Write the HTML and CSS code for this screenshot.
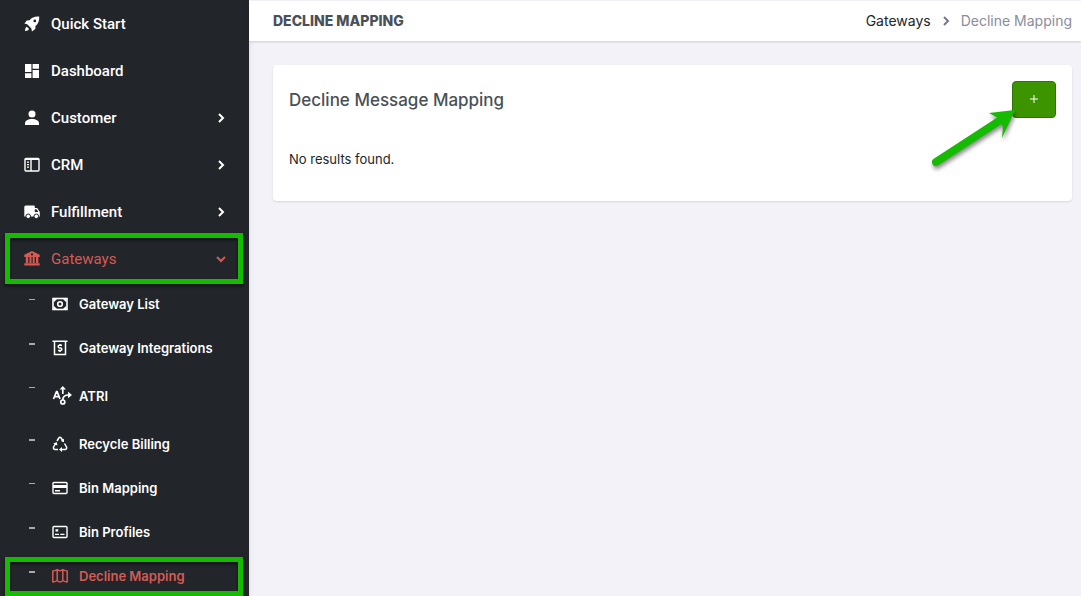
FILE: index.html
```html
<!DOCTYPE html>
<html lang="en">
<head>
<meta charset="utf-8">
<title>Decline Mapping</title>
<link rel="stylesheet" href="styles.css">
</head>
<body>
<div class="app">
  <nav class="sidebar" aria-label="Main">
    <ul class="menu">
      <li><a class="menu-link" href="#">
        <svg class="icon" viewBox="0 0 16 16"><path fill="currentColor" fill-rule="evenodd" d="M15.200.6C11 .2 7.800 1.500 5.600 4.200L2.800 4.400.4 7.600l2.800.6 4.200 4.200.5 3 3.400-2.400.2-2.900C14.200 7.800 15.500 5 15.200.6zM10.800 3.500a1.400 1.400 0 1 1 0 2.800 1.400 1.400 0 0 1 0-2.800zM2.800 10.800l2.300 2.300L3.800 14.400.9 15l.6-2.900z"/></svg>
        <span>Quick Start</span></a></li>
      <li><a class="menu-link" href="#">
        <svg class="icon" viewBox="0 0 16 16"><path fill="currentColor" d="M1 1h6.400v8H1zM8.600 1H15v4.800H8.600zM1 10.200h6.400V15H1zM8.600 7H15v8H8.600z"/></svg>
        <span>Dashboard</span></a></li>
      <li><a class="menu-link" href="#">
        <svg class="icon" viewBox="0 0 16 16"><circle cx="8" cy="4" r="3.500" fill="currentColor"/><path fill="currentColor" d="M1 15v-1.500C1 10.500 4 9 8 9s7 1.500 7 4.500V15z"/></svg>
        <span>Customer</span>
        <svg class="caret" viewBox="0 0 10 10"><path d="M3 1l4 4-4 4"/></svg></a></li>
      <li><a class="menu-link" href="#">
        <svg class="icon" viewBox="0 0 16 16"><g fill="none" stroke="currentColor" stroke-width="1.400"><rect x="1" y="1.500" width="14" height="12.500" rx="1"/><path d="M7 2v12M1 2.200h14"/></g><path fill="currentColor" d="M3 4.500h2v1.300H3zM3 7h2v1.300H3zM3 9.500h2v1.300H3z"/></svg>
        <span>CRM</span>
        <svg class="caret" viewBox="0 0 10 10"><path d="M3 1l4 4-4 4"/></svg></a></li>
      <li><a class="menu-link" href="#">
        <svg class="icon" viewBox="0 0 16 16"><path fill="currentColor" fill-rule="evenodd" d="M1.800 1.500h8q1 0 1 1V4h2.300L15.800 8v4.500h-1.100a2.300 2.300 0 0 1-4.500 0H6.500a2.300 2.300 0 0 1-4.500 0H.3V3q0-1.500 1.500-1.500zM10.800 5.300V8h3.600l-1.900-2.700z"/><g fill="currentColor" stroke="#22252a"><circle cx="4.200" cy="12.300" r="2.300"/><circle cx="12.300" cy="12.300" r="2.300"/></g></svg>
        <span>Fulfillment</span>
        <svg class="caret" viewBox="0 0 10 10"><path d="M3 1l4 4-4 4"/></svg></a></li>
      <li class="marked"><a class="menu-link active" href="#" aria-expanded="true">
        <svg class="icon" viewBox="0 0 16 16"><path fill="currentColor" fill-rule="evenodd" d="M8 0l7.700 3.700V6H.3V3.700zM8 2.300a1.100 1.100 0 1 0 0 2.200 1.100 1.100 0 0 0 0-2.200zM1.800 6h2.400v6.500H1.800zM5.500 6h2v6.500h-2zM8.700 6h2v6.500h-2zM12 6h2.300v6.500H12zM.3 12.200h15.400v2.300H.3z"/></svg>
        <span>Gateways</span>
        <svg class="caret" viewBox="0 0 10 10"><path d="M1 3l4 4 4-4"/></svg></a></li>
    </ul>
    <ul class="submenu">
      <li><a class="sub-link" href="#">
        <svg class="icon" viewBox="0 0 16 16"><g fill="none" stroke="currentColor" stroke-width="1.600"><rect x="1" y="2.500" width="14" height="11"/><circle cx="8" cy="8" r="2.300"/></g><path fill="currentColor" d="M1 3h4L2 6zM15 3h-4l3 3zM1 13h4l-3-3zM15 13h-4l3-3z"/></svg>
        <span>Gateway List</span></a></li>
      <li><a class="sub-link" href="#">
        <svg class="icon" viewBox="0 0 16 16"><path fill="none" stroke="currentColor" stroke-width="1.500" d="M.5 1.200h15M2.500 1.500v13h11v-13M10 5.300H7.400q-1.200 0-1.200 1.300T7.400 8h1.200q1.200 0 1.200 1.300t-1.200 1.300H6M8 4v1.300M8 10.500v1.400"/></svg>
        <span>Gateway Integrations</span></a></li>
      <li class="tall"><a class="sub-link" href="#">
        <svg class="icon icon-wide" viewBox="0 0 20 20"><g fill="none" stroke="currentColor" stroke-width="1.700"><path d="M1.500 13L4.500 5.500h.6L8 13M2.800 10.700h4.200M10.800 8V3M10.800 14c0-4 2-5 6-5"/><circle cx="10.800" cy="16" r="2"/></g><path fill="currentColor" d="M10.800 0l3.200 3.500H7.600zM16 5.800l4 3.200-4 3.200z"/></svg>
        <span>ATRI</span></a></li>
      <li><a class="sub-link" href="#">
        <svg class="icon" viewBox="0 0 16 16"><path fill="none" stroke="currentColor" stroke-width="1.500" d="M5 5l1.800-3q1.200-1.500 2.400 0L11 5M12.500 7.500l2 3.500q.7 2-1.300 2.500H9M6 13.500H3Q.8 13 1.600 11l1.900-3.300"/><path fill="currentColor" d="M12 2.700v3.600L8.800 5zM10 11v5l-3-2.500zM1.300 7.700L4.700 6l.8 3.500z"/></svg>
        <span>Recycle Billing</span></a></li>
      <li><a class="sub-link" href="#">
        <svg class="icon" viewBox="0 0 16 16"><rect x="1" y="2.500" width="14" height="11" rx="1" fill="none" stroke="currentColor" stroke-width="1.400"/><path fill="currentColor" d="M1 5h14v3H1zM3 10h5v1.400H3z"/></svg>
        <span>Bin Mapping</span></a></li>
      <li><a class="sub-link" href="#">
        <svg class="icon" viewBox="0 0 16 16"><rect x="1" y="2.500" width="14" height="11" rx="1" fill="none" stroke="currentColor" stroke-width="1.400"/><path fill="currentColor" d="M3.500 5.300h2.700v2.200H3.500zM3 9.700h4V11H3zM8.300 9.700h4.200V11H8.300z"/></svg>
        <span>Bin Profiles</span></a></li>
      <li class="marked"><a class="sub-link active" href="#" aria-current="page">
        <svg class="icon" viewBox="0 0 16 16"><path fill="none" stroke="currentColor" stroke-width="1.500" stroke-linejoin="round" d="M.8 3Q3 3 5.200 1.500q2.800 2.400 5.600 0Q13 3 15.200 3v11q-2.200 0-4.400-1.500-2.800 2.800-5.600 0Q3 14 .8 14zM5.200 1.500v11M10.800 1.500v11"/></svg>
        <span>Decline Mapping</span></a></li>
    </ul>
  </nav>
  <div class="page">
    <header class="topbar">
      <h1 class="page-title">DECLINE MAPPING</h1>
      <nav class="breadcrumb" aria-label="Breadcrumb">
        <a class="crumb" href="#">Gateways</a>
        <svg class="crumb-caret" viewBox="0 0 10 10"><path d="M3 1l4 4-4 4"/></svg>
        <span>Decline Mapping</span>
      </nav>
    </header>
    <main class="content">
      <section class="card">
        <div class="card-head">
          <h2 class="card-title">Decline Message Mapping</h2>
          <div class="add-wrap">
            <button class="add" type="button" aria-label="Add"><svg class="plus" viewBox="0 0 8 8"><path d="M4 0v8M0 4h8"/></svg></button>
            <svg class="pointer" viewBox="0 0 90 66"><path fill="none" stroke="#14bb00" stroke-width="8" stroke-linecap="round" d="M8 56L71 15"/><path fill="#14bb00" d="M87 4L61 7l9 5 5 9-1 11z"/></svg>
          </div>
        </div>
        <p class="empty">No results found.</p>
      </section>
    </main>
  </div>
</div>
</body>
</html>
```
FILE: styles.css
```css
* { box-sizing: border-box; }
body {
  margin: 0;
  overflow: hidden;
  background: #f3f2f9;
  color: #212529;
  font: 13px/20px Inter, "Liberation Sans", sans-serif;
}
a { color: inherit; text-decoration: none; }
ul { list-style: none; margin: 0; padding: 0; }
.app { display: flex; height: 100vh; }

.sidebar {
  flex: 0 0 249px;
  background: #22252a;
  color: #fff;
  overflow: hidden;
}
.menu-link {
  display: flex;
  align-items: center;
  gap: 11px;
  height: 47px;
  padding: 0 23px 0 24px;
  font: 500 15px/20px Roboto, sans-serif;
}
.menu-link.active { font-weight: 400; }
.icon { flex: none; width: 16px; height: 16px; }
.icon-wide { width: 20px; height: 20px; margin-right: -4px; }
.caret {
  width: 10px;
  height: 10px;
  margin-left: auto;
  fill: none;
  stroke: currentColor;
  stroke-width: 2;
}
.submenu li { position: relative; }
.submenu li::before {
  content: "";
  position: absolute;
  left: 29px;
  top: 17px;
  width: 6px;
  height: 1px;
  background: #a9abad;
}
.submenu li:nth-child(even)::before,
.submenu li:last-child::before { height: 2px; }
.sub-link {
  display: flex;
  align-items: center;
  gap: 11px;
  height: 44px;
  padding-left: 52px;
  font-size: 13px;
  font-weight: 600;
}
.tall .sub-link { height: 52px; }
.active { color: #d65a54; }
.marked { position: relative; }
.marked::after {
  content: "";
  position: absolute;
  inset: -2px 6px -2px 5px;
  border: 5px solid #14bb00;
  box-shadow: 0 2px 3px #0009, inset 0 2px 3px #0009;
  pointer-events: none;
}
.submenu .marked::after { inset: 3px 6px 2px 5px; }

.page { flex: 1; min-width: 0; box-shadow: inset 4px 0 4px -3px #00000014; }
.topbar {
  display: flex;
  align-items: center;
  justify-content: space-between;
  height: 41px;
  padding: 0 9px 0 24px;
  background: #fff;
  border-top: 1px solid #f0f0f6;
  box-shadow: 0 1px 2px #38414a33;
}
.page-title, .card-title { margin: 0; color: #495057; }
.page-title { font-size: 14px; font-weight: 800; }
.breadcrumb { display: flex; align-items: center; gap: 10px; font-size: 14px; color: #8b8d9c; }
.crumb { color: #212529; }
.crumb-caret {
  width: 10px;
  height: 10px;
  fill: none;
  stroke: #74788d;
  stroke-width: 2;
}
.content { padding: 24px 9px 24px 24px; }
.card {
  padding: 16px 16px 32px;
  background: #fff;
  border-radius: 4px;
  box-shadow: 0 1px 2px #38414a26;
}
.card-head { display: flex; align-items: center; justify-content: space-between; }
.card-title { font-size: 17px; font-weight: 500; }
.add-wrap { position: relative; }
.add {
  display: flex;
  align-items: center;
  justify-content: center;
  width: 44px;
  height: 37px;
  padding: 0 0 2px;
  background: #3c9400;
  border: 1px solid #2f7600;
  border-radius: 4px;
}
.plus { width: 8px; height: 8px; stroke: #fff; stroke-width: 1; }
.pointer {
  position: absolute;
  right: 38px;
  top: 25px;
  width: 90px;
  height: 66px;
  overflow: visible;
  filter: drop-shadow(1px 3px 2px #0007);
  pointer-events: none;
}
.empty { margin: 31px 0 0; }
```
